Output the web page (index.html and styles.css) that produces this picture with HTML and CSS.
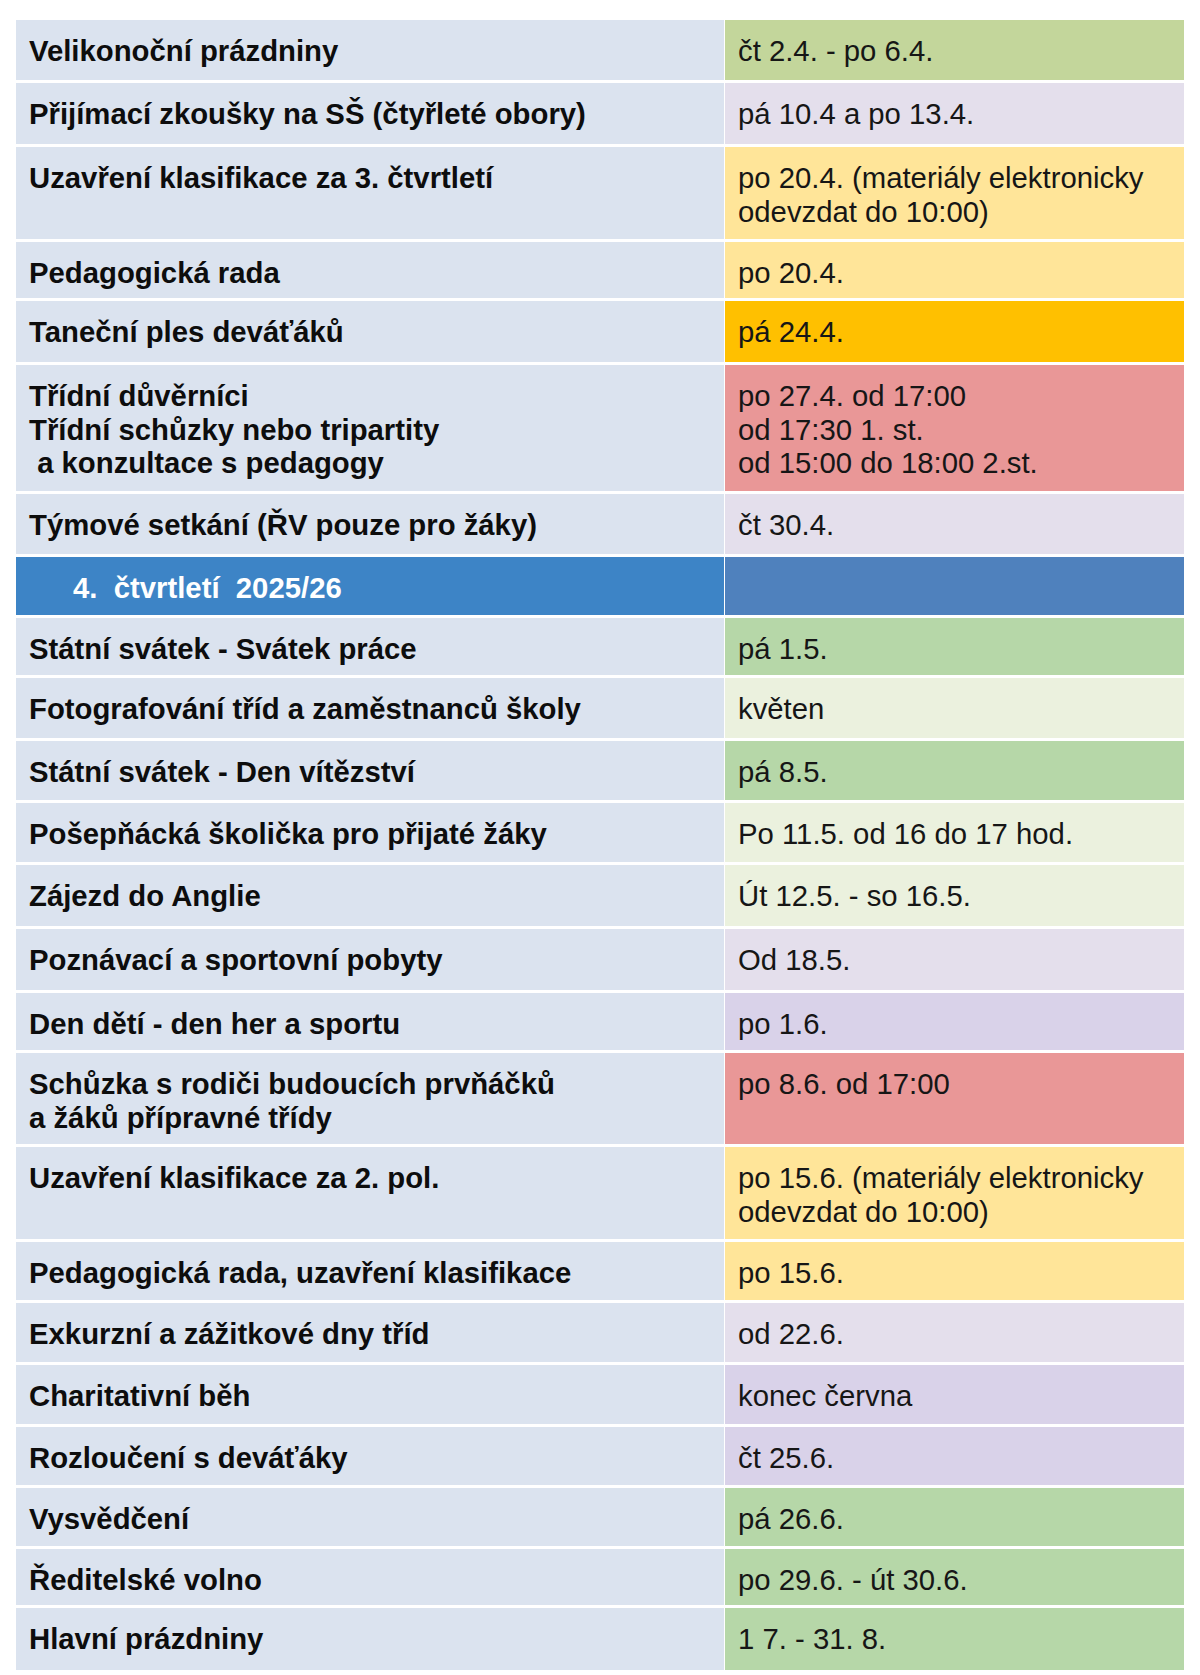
FILE: index.html
```html
<!DOCTYPE html>
<html lang="cs">
<head>
<meta charset="utf-8">
<title>Harmonogram</title>
<link rel="stylesheet" href="styles.css">
</head>
<body>
<div class="schedule">
  <div class="cell label">Velikonoční prázdniny</div>
  <div class="cell date olive">čt 2.4. - po 6.4.</div>

  <div class="cell label">Přijímací zkoušky na SŠ (čtyřleté obory)</div>
  <div class="cell date lilac">pá 10.4 a po 13.4.</div>

  <div class="cell label">Uzavření klasifikace za 3. čtvrtletí</div>
  <div class="cell date yellow">po 20.4. (materiály elektronicky<br>odevzdat do 10:00)</div>

  <div class="cell label">Pedagogická rada</div>
  <div class="cell date yellow">po 20.4.</div>

  <div class="cell label">Taneční ples deváťáků</div>
  <div class="cell date gold">pá 24.4.</div>

  <div class="cell label">Třídní důvěrníci<br>Třídní schůzky nebo tripartity<br>&nbsp;a konzultace s pedagogy</div>
  <div class="cell date rose">po 27.4. od 17:00<br>od 17:30 1. st.<br>od 15:00 do 18:00 2.st.</div>

  <div class="cell label">Týmové setkání (ŘV pouze pro žáky)</div>
  <div class="cell date lilac">čt 30.4.</div>

  <div class="cell head-left">4.&nbsp; čtvrtletí&nbsp; 2025/26</div>
  <div class="cell head-right"></div>

  <div class="cell label">Státní svátek - Svátek práce</div>
  <div class="cell date green">pá 1.5.</div>

  <div class="cell label">Fotografování tříd a zaměstnanců školy</div>
  <div class="cell date pale">květen</div>

  <div class="cell label">Státní svátek - Den vítězství</div>
  <div class="cell date green">pá 8.5.</div>

  <div class="cell label">Pošepňácká školička pro přijaté žáky</div>
  <div class="cell date pale">Po 11.5. od 16 do 17 hod.</div>

  <div class="cell label">Zájezd do Anglie</div>
  <div class="cell date pale">Út 12.5. - so 16.5.</div>

  <div class="cell label">Poznávací a sportovní pobyty</div>
  <div class="cell date lilac">Od 18.5.</div>

  <div class="cell label">Den dětí - den her a sportu</div>
  <div class="cell date violet">po 1.6.</div>

  <div class="cell label">Schůzka s rodiči budoucích prvňáčků<br>a žáků přípravné třídy</div>
  <div class="cell date rose">po 8.6. od 17:00</div>

  <div class="cell label">Uzavření klasifikace za 2. pol.</div>
  <div class="cell date yellow">po 15.6. (materiály elektronicky<br>odevzdat do 10:00)</div>

  <div class="cell label">Pedagogická rada, uzavření klasifikace</div>
  <div class="cell date yellow">po 15.6.</div>

  <div class="cell label">Exkurzní a zážitkové dny tříd</div>
  <div class="cell date lilac">od 22.6.</div>

  <div class="cell label">Charitativní běh</div>
  <div class="cell date violet">konec června</div>

  <div class="cell label">Rozloučení s deváťáky</div>
  <div class="cell date violet">čt 25.6.</div>

  <div class="cell label">Vysvědčení</div>
  <div class="cell date green">pá 26.6.</div>

  <div class="cell label">Ředitelské volno</div>
  <div class="cell date green">po 29.6. - út 30.6.</div>

  <div class="cell label">Hlavní prázdniny</div>
  <div class="cell date green">1 7. - 31. 8.</div>
</div>
</body>
</html>
```
FILE: styles.css
```css
html, body {
  margin: 0;
  padding: 0;
  background: #ffffff;
}

body {
  padding: 20px 16px 5px 16px;
  font-family: "Liberation Sans", Arial, sans-serif;
  font-size: 29.3px;
  line-height: 1.15;
  color: #111111;
}

.schedule {
  display: grid;
  grid-template-columns: 708px 459px;
  grid-template-rows:
    60px 61px 92px 56px 61px 126px 60px 58px
    57px 60px 59px 59px 61px 61px 57px 91px
    92px 58px 59px 59px 58px 58px 56px 62px;
  column-gap: 1px;
  row-gap: 3px;
  width: 1168px;
}

.cell {
  padding: 14px 13px 0 13px;
  box-sizing: border-box;
  overflow: hidden;
}

.label {
  background: #dbe3ef;
  font-weight: bold;
  color: #0d0d0d;
}

.date {
  color: #161616;
}

.head-left {
  background: #3d84c6;
  color: #ffffff;
  font-weight: bold;
  padding-left: 57px;
}

.head-right {
  background: #4f81bd;
}

.olive  { background: #c3d69b; }
.lilac  { background: #e4dfec; }
.yellow { background: #ffe599; }
.gold   { background: #ffc000; }
.rose   { background: #e99797; }
.green  { background: #b6d7a8; }
.pale   { background: #ebf1de; }
.violet { background: #d9d2e9; }
```
